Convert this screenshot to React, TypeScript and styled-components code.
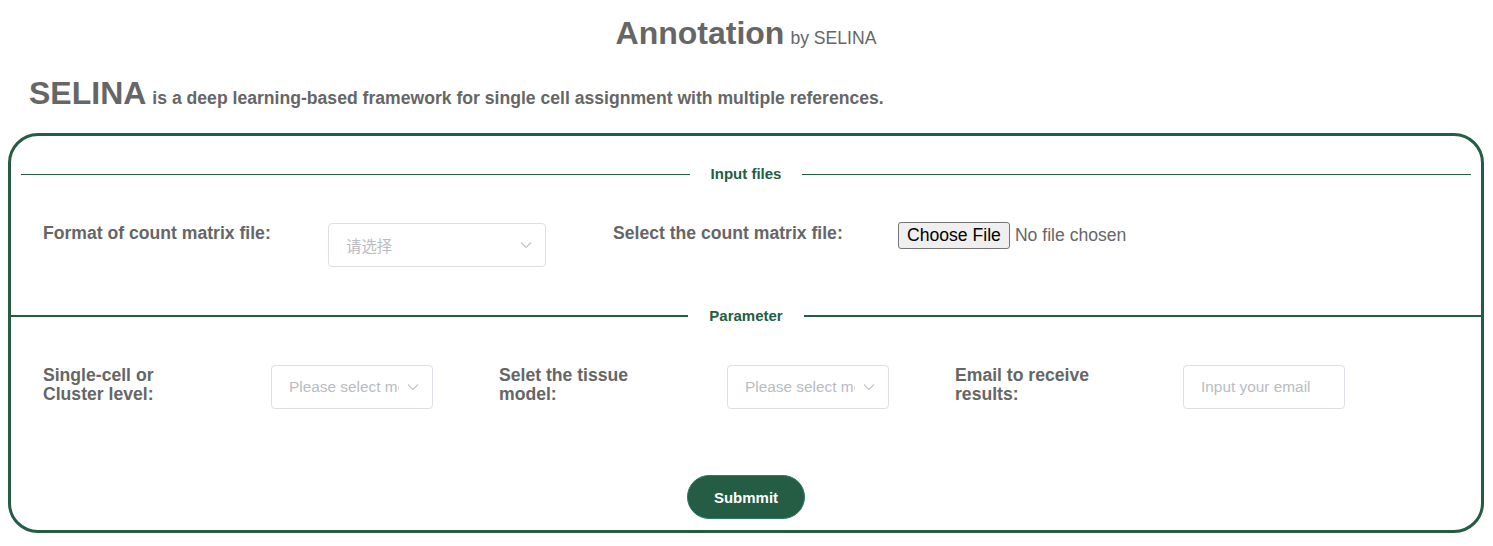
import React from "react";
import styled, { createGlobalStyle } from "styled-components";

const GREEN = "#245c44";
const GREY = "#666666";

const Global = createGlobalStyle`
  html, body { margin: 0; padding: 0; background: #fff; }
  body { font-family: "Liberation Sans", Arial, Helvetica, sans-serif; color: ${GREY}; }
  * { box-sizing: border-box; }
`;

const Page = styled.div`
  padding: 0 9px 0 8px;
`;

const Title = styled.h1`
  margin: 0;
  padding-top: 13px;
  text-align: center;
  font-size: 32px;
  line-height: 40px;
  font-weight: 700;
  color: ${GREY};
`;

const TitleSub = styled.span`
  font-size: 17.6px;
  font-weight: 400;
  margin-left: 6px;
`;

const Intro = styled.p`
  margin: 17px 0 17px 21px;
  font-size: 17.6px;
  font-weight: 700;
  line-height: 36px;
  color: ${GREY};
`;

const Brand = styled.span`
  font-size: 32px;
  margin-right: 6px;
`;

const Card = styled.form`
  border: 3px solid ${GREEN};
  border-radius: 30px;
  height: 400px;
  display: flex;
  flex-direction: column;
`;

const Divider = styled.div<{ $inset: number; $weight: number; $gap: number }>`
  display: flex;
  align-items: center;
  margin: 0 ${(p) => p.$inset}px;
  &::before, &::after {
    content: "";
    flex: 1;
    border-top: ${(p) => p.$weight}px solid ${GREEN};
  }
  & > span {
    padding: 0 ${(p) => p.$gap}px;
    font-size: 15px;
    font-weight: 700;
    color: ${GREEN};
    line-height: 20px;
  }
`;

const FormRow = styled.div<{ $cols: number }>`
  display: grid;
  grid-template-columns: repeat(${(p) => p.$cols}, ${(p) => (p.$cols === 2 ? 570 : 456)}px);
  margin-left: 32px;
`;

const Field = styled.div`
  display: grid;
  grid-template-columns: 50% 50%;
  align-items: start;
`;

const Label = styled.label`
  font-size: 17.6px;
  font-weight: 700;
  line-height: 19px;
  color: ${GREY};
  padding-top: 1px;
  padding-right: 10px;
`;

const SelectBox = styled.div<{ $w: number }>`
  width: ${(p) => p.$w}px;
  height: 44px;
  border: 1px solid #dcdfe6;
  border-radius: 4px;
  display: flex;
  align-items: center;
  padding: 0 13px 0 17px;
  background: #fff;
`;

const Placeholder = styled.span`
  flex: 1;
  overflow: hidden;
  white-space: nowrap;
  font-size: 15.4px;
  color: #b9bcc3;
  font-family: "Liberation Sans", "Noto Sans CJK SC", sans-serif;
`;

const Chevron = styled.svg`
  flex: none;
  margin-left: 8px;
`;

const TextInput = styled.input`
  width: 162px;
  height: 44px;
  border: 1px solid #dcdfe6;
  border-radius: 4px;
  padding: 0 17px;
  font-family: "Liberation Sans", Arial, sans-serif;
  font-size: 15.4px;
  outline: none;
  &::placeholder { color: #b9bcc3; }
`;

const FileInput = styled.input`
  font-family: "Liberation Sans", Arial, sans-serif;
  font-size: 17.6px;
  color: ${GREY};
  margin-top: -1px;
  &::file-selector-button {
    font-family: "Liberation Sans", Arial, sans-serif;
    font-size: 17.6px;
    color: #000;
    background: #efefef;
    border: 1px solid #767676;
    border-radius: 3px;
    padding: 2px 8px;
    margin-right: 5px;
  }
`;

const SubmitRow = styled.div`
  display: flex;
  justify-content: center;
`;

const SubmitButton = styled.button`
  width: 118px;
  height: 44px;
  border-radius: 22px;
  background: ${GREEN};
  border: 1px solid #2f7a6a;
  color: #fff;
  font-family: "Liberation Sans", Arial, sans-serif;
  font-size: 15px;
  font-weight: 700;
  cursor: pointer;
`;

const Down = () => (
  <Chevron width="12" height="8" viewBox="0 0 12 8" fill="none">
    <path d="M1 1.5 L6 6.5 L11 1.5" stroke="#c0c4cc" strokeWidth="1.1" />
  </Chevron>
);

const Select = ({ w, text }: { w: number; text: string }) => (
  <SelectBox $w={w}>
    <Placeholder>{text}</Placeholder>
    <Down />
  </SelectBox>
);

export default function App() {
  return (
    <Page>
      <Global />
      <Title>
        Annotation<TitleSub>by SELINA</TitleSub>
      </Title>
      <Intro>
        <Brand>SELINA</Brand>is a deep learning-based framework for single cell assignment with multiple references.
      </Intro>
      <Card onSubmit={(e) => e.preventDefault()}>
        <Divider $inset={10} $weight={1} $gap={21} style={{ marginTop: 28 }}>
          <span>Input files</span>
        </Divider>
        <FormRow $cols={2} style={{ marginTop: 39 }}>
          <Field>
            <Label>Format of count matrix file:</Label>
            <Select w={218} text="请选择" />
          </Field>
          <Field>
            <Label>Select the count matrix file:</Label>
            <FileInput type="file" />
          </Field>
        </FormRow>
        <Divider $inset={0} $weight={2} $gap={21} style={{ marginTop: 39 }}>
          <span>Parameter</span>
        </Divider>
        <FormRow $cols={3} style={{ marginTop: 39 }}>
          <Field>
            <Label>Single-cell or<br />Cluster level:</Label>
            <Select w={162} text="Please select mode" />
          </Field>
          <Field>
            <Label>Selet the tissue<br />model:</Label>
            <Select w={162} text="Please select model" />
          </Field>
          <Field>
            <Label>Email to receive<br />results:</Label>
            <TextInput type="email" placeholder="Input your email" />
          </Field>
        </FormRow>
        <SubmitRow style={{ marginTop: 66 }}>
          <SubmitButton type="submit">Submmit</SubmitButton>
        </SubmitRow>
      </Card>
    </Page>
  );
}
